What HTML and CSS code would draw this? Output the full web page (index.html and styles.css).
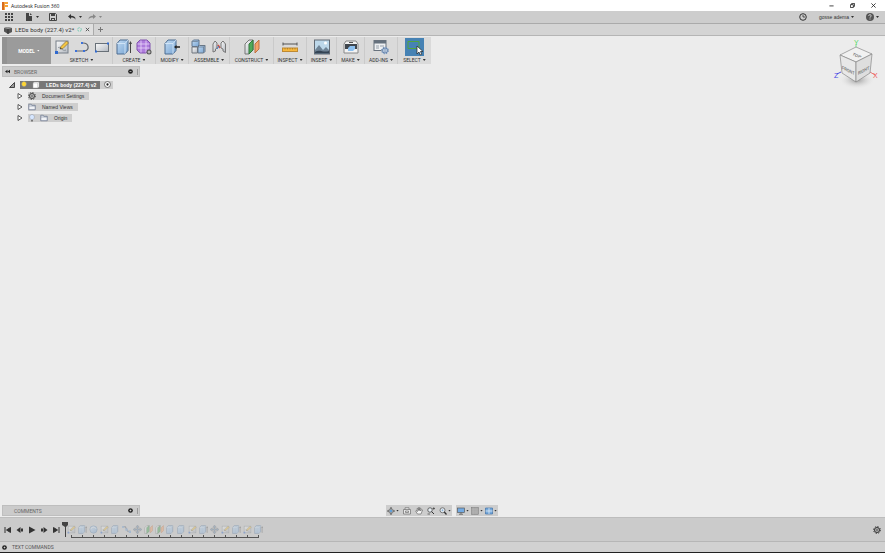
FILE: index.html
```html
<!DOCTYPE html>
<html lang="en">
<head>
<meta charset="utf-8">
<title>Autodesk Fusion 360</title>
<link rel="stylesheet" href="styles.css">
</head>
<body>
<svg class="defs" aria-hidden="true">
  <defs>
    <linearGradient id="blue" x1="0" y1="0" x2="1" y2="1"><stop offset="0" stop-color="#c2dbf3"/><stop offset="1" stop-color="#76a3d2"/></linearGradient>
    <linearGradient id="grey" x1="0" y1="0" x2="1" y2="1"><stop offset="0" stop-color="#fafafa"/><stop offset="1" stop-color="#b2b8c0"/></linearGradient>
    <radialGradient id="shade"><stop offset="0" stop-color="#999"/><stop offset="1" stop-color="#ececec" stop-opacity="0"/></radialGradient>
  </defs>
  <symbol id="sketch" viewBox="0 0 16 16"><rect x="2" y="2" width="12" height="12" fill="url(#grey)" stroke="#777f88"/><path d="M4 9c2-3 4 4 8 2" fill="none" stroke="#8a9199"/><path d="M6 10l1-2.500 5.500-5.500 2 2L9 9.500z" fill="#f4c542" stroke="#816b35" stroke-width=".7"/><path d="M6 10l.6-1.600L7.800 9.500z" fill="#333"/><path d="M1 12h3v3H1z" fill="#2f69cf"/></symbol>
  <symbol id="arc" viewBox="0 0 16 16"><path d="M2 12h8.500C16 11 15 4 9 4" fill="none" stroke="#62676e" stroke-width="1.200"/><path d="M1 11h2v2H1zM9 11h2v2H9zM7 3h2v2H7z" fill="#3d72da"/></symbol>
  <symbol id="rect" viewBox="0 0 16 16"><rect x="1.500" y="4.500" width="13" height="8" fill="url(#grey)" stroke="#687078"/><path d="M13 3.500h2v2h-2zM1 11.500h2v2H1z" fill="#2f69cf"/></symbol>
  <symbol id="box" viewBox="0 0 16 16"><path d="M1 4.500L4 1h8v10.500L9 15H1z" fill="url(#blue)" stroke="#4c6d91" stroke-linejoin="round"/><path d="M1 4.500h8L12 1M9 4.500V15" fill="none" stroke="#d9eafa" stroke-width=".8"/></symbol>
  <symbol id="extrude" viewBox="0 0 16 16"><use href="#box"/><path d="M14.500 14V4" stroke="#444" stroke-width="1"/><path d="M13 5l1.500-3L16 5z" fill="#444"/></symbol>
  <symbol id="form" viewBox="0 0 16 16"><path d="M4 1h7l3 3v7l-4 3H4l-3-3V4z" fill="#ae7bdd" stroke="#8053ae"/><path d="M1.500 5h12M1.500 9h12M5 1.500v12M10 1.500v12" stroke="#ead9fa" stroke-width=".8"/><circle cx="13" cy="13" r="2.500" fill="#555"/><path d="M11.500 13h3M13 11.500v3" stroke="#fff" stroke-width=".7"/></symbol>
  <symbol id="press" viewBox="0 0 16 16"><use href="#box"/><path d="M10 8l2.500-2v1.300H16v1.400h-3.500V10z" fill="#222"/></symbol>
  <symbol id="component" viewBox="0 0 16 16"><path d="M1 2.500L2.500 1H8v5L6.500 7.500H1z" fill="url(#blue)" stroke="#5d7590"/><path d="M1 8h5.500v6H1z" fill="url(#grey)" stroke="#71777f"/><path d="M7 8l1.500-1.500H14v6L12.500 14H7z" fill="url(#blue)" stroke="#697786"/><path d="M7 8h5.500L14 6.500M12.500 8v6M1 2.500h5.500L8 1" fill="none" stroke="#65778a" stroke-width=".7"/></symbol>
  <symbol id="joint" viewBox="0 0 16 16"><path d="M2 13V5l2-3 2 2v5l-1.500 1v2z" fill="url(#grey)" stroke="#777"/><path d="M10 9V4l2-2 2.500 3v8.500L12 12v-2z" fill="url(#grey)" stroke="#777"/><path d="M7 6l2 3" stroke="#d24d3c" stroke-width="1.500"/><path d="M6 10l2-3" stroke="#3d72c4"/></symbol>
  <symbol id="plane" viewBox="0 0 16 16"><path d="M1 5l4-4h4v10l-4 4H1z" fill="url(#grey)" stroke="#777"/><path d="M5 5l4-4v10l-4 4z" fill="#4eaa59" stroke="#34783d"/><path d="M11 5l4-4v9l-4 4z" fill="#f4a36a" stroke="#bd7142"/></symbol>
  <symbol id="measure" viewBox="0 0 16 16"><path d="M1 5h14M1 3.500v3M15 3.500v3" stroke="#555"/><rect x=".5" y="9" width="15" height="3.500" fill="#f7b83e" stroke="#bd8a34"/><path d="M3 9v1.500M5.500 9v1.500M8 9v1.500M10.500 9v1.500M13 9v1.500" stroke="#8c621b" stroke-width=".5"/></symbol>
  <symbol id="image" viewBox="0 0 16 16"><rect x=".5" y="1" width="15" height="14" fill="#bdd8ea" stroke="#626b75"/><path d="M1 11l4-5 4 5 3-3 3 3v3.500H1z" fill="#6f8496"/><path d="M1 13c5-3 8 1 14-1v2.500H1z" fill="#344454"/><circle cx="11.500" cy="4" r="1.500" fill="#fff"/></symbol>
  <symbol id="printer" viewBox="0 0 16 16"><path d="M3 2h10l2 3v9H1V5z" fill="#f2f2f2" stroke="#888"/><path d="M2 5h12v5H2z" fill="#40464d"/><path d="M5 9l2-2h5v3l-2 2H5z" fill="#8cc0ef"/><path d="M6 3.500h4" stroke="#555"/></symbol>
  <symbol id="gear" viewBox="0 0 16 16"><circle cx="8" cy="8" r="5" fill="none" stroke="currentColor" stroke-width="2"/><circle cx="8" cy="8" r="6.800" fill="none" stroke="currentColor" stroke-width="2" stroke-dasharray="2.670 2.670"/><circle cx="8" cy="8" r="2" fill="none" stroke="currentColor" stroke-width="1.200"/></symbol>
  <symbol id="addins" viewBox="0 0 16 16"><rect x="1" y="1.500" width="12" height="10" fill="#eef0f2" stroke="#68727d"/><path d="M1 2h12v2.500H1z" fill="#65717d"/><path d="M3 7h3M3 9h3M7 7h4" stroke="#96a0aa"/><circle cx="12" cy="11.500" r="3.500" fill="#d4e1ef"/><use href="#gear" x="8" y="7.500" width="8" height="8" color="#5c7ca5"/></symbol>
  <symbol id="select" viewBox="0 0 19 18"><rect width="19" height="18" fill="#4682b4"/><path d="M3 3.500h11v7H3z" fill="none" stroke="#51a53e" stroke-width="1"/><path d="M12 8v8l2-2 1.200 3 1.500-.7-1.200-2.800H18z" fill="#fff" stroke="#222" stroke-width=".7"/></symbol>
  <symbol id="folder" viewBox="0 0 16 16"><path d="M1.500 13.500v-11h5l1 2h7v9z" fill="#f0f2f6" stroke="#667289" stroke-width="1.500"/><path d="M2 6h12" stroke="#667289"/></symbol>
  <symbol id="bulb" viewBox="0 0 16 16"><path d="M6 11C1 7 3.500 1 8 1s7 6 2 10z" fill="currentColor" stroke="#8d93a0"/><path d="M6 12h4v3H6z" fill="#777"/></symbol>
  <symbol id="cube" viewBox="0 0 16 16"><path d="M2 4l3-2h9v10l-3 2H2z" fill="#fff" stroke="#999"/><path d="M2 4h9l3-2M11 4v10" fill="none" stroke="#bbb"/></symbol>
  <symbol id="sphere" viewBox="0 0 16 16"><circle cx="8" cy="8" r="6.500" fill="url(#blue)" stroke="#5279a1"/><path d="M3 7c3-4 7-4 10 0" fill="none" stroke="#fff"/></symbol>
  <symbol id="chain" viewBox="0 0 16 16"><path d="M1 3h5l4 8h5" fill="none" stroke="#61676f" stroke-width="2"/><path d="M0 2h4v3H0zM6 6h4v4H6zM12 10h4v4h-4z" fill="#6fa0d8"/></symbol>
  <symbol id="move" viewBox="0 0 16 16"><path d="M8 0l3 4H9v3h3V5l4 3-4 3V9H9v3h2l-3 4-3-4h2V9H4v2L0 8l4-3v2h3V4H5z" fill="#6b8bad" stroke="#555" stroke-width=".6"/></symbol>
  <symbol id="orbit" viewBox="0 0 16 16"><path d="M8 0l2.500 3h-5zM8 16l2.500-3h-5zM0 8l3-2.500v5zM16 8l-3-2.500v5z" fill="#444"/><ellipse cx="8" cy="8" rx="6" ry="3" fill="none" stroke="#666"/><ellipse cx="8" cy="8" rx="3" ry="6" fill="none" stroke="#666"/><circle cx="8" cy="8" r="2.500" fill="#63a1d9"/></symbol>
  <symbol id="look" viewBox="0 0 16 16"><path d="M1 5h14v9H1zM4 5V1.500h8V5M5 8h6v3H5z" fill="#e8e8e8" stroke="#666" stroke-width="1.300"/></symbol>
  <symbol id="hand" viewBox="0 0 16 16"><path d="M5 14L1 8l1-1 3 2-1-6 1.500-.5L7 7V1h2v6l1.500-5L12 3l-1 5 2.500-3L15 6l-3 8z" fill="#f4f4f4" stroke="#444"/></symbol>
  <symbol id="zoom" viewBox="0 0 16 16"><circle cx="7" cy="6.500" r="5" fill="#e7eef4" stroke="#555" stroke-width="1.500"/><path d="M5 6.500h4M7 4.500v4" stroke="#6297c8"/><path d="M10.500 10l4.500 5" stroke="#333" stroke-width="2.500"/></symbol>
  <symbol id="zoompm" viewBox="0 0 16 16"><circle cx="6" cy="6" r="4.500" fill="#e7eef4" stroke="#444" stroke-width="1.500"/><path d="M9 9l5 5" stroke="#333" stroke-width="2"/><path d="M11 3h5M13.500 .5v5M1 14h5" stroke="#333" stroke-width="1.300"/></symbol>
  <symbol id="monitor" viewBox="0 0 16 16"><rect x="1" y="2" width="14" height="9" fill="#73aae2" stroke="#555" stroke-width="1.300"/><path d="M8 11v3M4 14.500h8" stroke="#555" stroke-width="1.500"/></symbol>
  <symbol id="grid" viewBox="0 0 16 16"><rect x="1" y="1" width="14" height="14" fill="#aaa" stroke="#777"/><path d="M1 5h14M1 10h14M5 1v14M10 1v14" stroke="#bbb" stroke-width=".5"/></symbol>
  <symbol id="views" viewBox="0 0 16 16"><path d="M1 2h14v12H1z" fill="#76a9db" stroke="#3b6ca4" stroke-width="1.300"/><path d="M1 8h14M8 2v12" stroke="#e7f0fa" stroke-width="1.500"/></symbol>
  <symbol id="undo" viewBox="0 0 16 16"><path d="M0 7l6-5v3.500c6 0 9 2 9 8-2-4-4-4.500-9-4.500v3z" fill="currentColor"/></symbol>
  <symbol id="start" viewBox="0 0 16 16"><path d="M2 2v12M13 3v10L5 8z" fill="currentColor" stroke="currentColor" stroke-width="2"/></symbol>
  <symbol id="back" viewBox="0 0 16 16"><path d="M1 8l8-6v12zM10 5h4v6h-4z" fill="currentColor"/></symbol>
  <symbol id="play" viewBox="0 0 16 16"><path d="M2 1l13 7-13 7z" fill="currentColor"/></symbol>
  <symbol id="dot" viewBox="0 0 16 16"><circle cx="8" cy="8" r="7.500" fill="#222"/><path d="M5 8h6" stroke="#eee" stroke-width="2"/></symbol>
  <symbol id="dotplus" viewBox="0 0 16 16"><use href="#dot"/><path d="M8 5v6" stroke="#eee" stroke-width="2"/></symbol>
</svg>

<header class="titlebar">
  <svg class="i8" viewBox="0 0 8 8"><path d="M1 0h6v2H4v1h3v2H4v3H1z" fill="#f6a33b"/><path d="M1 0h2v8H1z" fill="#d76b21"/></svg>
  <h1>Autodesk Fusion 360</h1>
  <div class="window-buttons">
    <button aria-label="Minimize"><svg viewBox="0 0 6 6"><path d="M.5 3.500h5" stroke="#222"/></svg></button>
    <button aria-label="Restore"><svg viewBox="0 0 6 6"><path d="M.5 2h3.500v3.500H.5zM2 2V.5h3.500V4H4" fill="none" stroke="#222"/></svg></button>
    <button aria-label="Close"><svg viewBox="0 0 6 6"><path d="M.5.5l5 5M5.500.5l-5 5" stroke="#222"/></svg></button>
  </div>
</header>

<div class="quickbar">
  <button class="apps" aria-label="Data panel"><svg class="i8" viewBox="0 0 8 8"><path d="M0 0h2v2H0zM3 0h2v2H3zM6 0h2v2H6zM0 3h2v2H0zM3 3h2v2H3zM6 3h2v2H6zM0 6h2v2H0zM3 6h2v2H3zM6 6h2v2H6z" fill="#444"/></svg></button>
  <button class="file" aria-label="File"><svg class="i8" viewBox="0 0 8 8"><path d="M1 0h3v3h3v5H1zM5 0l2 2H5z" fill="#444"/></svg><i class="caret"></i></button>
  <button class="save" aria-label="Save"><svg class="i8" viewBox="0 0 8 8"><path d="M.5.5h6l1 1v6h-7z" fill="#ccc" stroke="#444"/><path d="M2 0h4v3H2zM2 5h4v3H2z" fill="#444"/><path d="M3 6h2v1H3z" fill="#ccc"/></svg></button>
  <button class="undo" aria-label="Undo"><svg class="i8"><use href="#undo"/></svg><i class="caret"></i></button>
  <button class="redo" aria-label="Redo"><svg class="i8 flip"><use href="#undo"/></svg><i class="caret"></i></button>
  <div class="account">
    <button aria-label="Job status"><svg class="i8" viewBox="0 0 8 8"><circle cx="4" cy="4" r="3.300" fill="none" stroke="#333"/><path d="M4 2v2h2" fill="none" stroke="#333" stroke-width=".8"/></svg></button>
    <button>gosse adema<i class="caret"></i></button>
    <button aria-label="Help"><svg class="i8" viewBox="0 0 8 8"><circle cx="4" cy="4" r="4" fill="#555"/><path d="M2.700 3c0-2 2.800-1.500 2.500 0-.1.800-1.200.7-1.200 1.700M4 5.500v1" fill="none" stroke="#eee" stroke-width=".8"/></svg><i class="caret"></i></button>
  </div>
</div>

<nav class="tabs">
  <div class="tab">
    <svg class="i8" viewBox="0 0 8 8"><path d="M0 2l3-1 5 1v4L4 8 0 5.500z" fill="#555"/><path d="M0 2l4 1 4-1-5-1z" fill="#999"/><path d="M4 3v5" stroke="#333"/></svg>
    <a href="#document">LEDs body (227.4) v2*</a>
    <svg class="i5" viewBox="0 0 6 6"><circle cx="3" cy="3" r="2.200" fill="none" stroke="#65c4ac" stroke-dasharray="2.500 1"/></svg>
    <button aria-label="Close tab"><svg class="i5" viewBox="0 0 6 6"><path d="M1 1l4 4M5 1L1 5" stroke="#444"/></svg></button>
  </div>
  <button class="newtab" aria-label="New tab"><svg class="i5" viewBox="0 0 5 5"><path d="M0 2.500h5M2.500 0v5" stroke="#777"/></svg></button>
</nav>

<main>
  <div class="ribbon">
    <button class="workspace">MODEL<i class="caret"></i></button>
    <section class="group three"><div><button aria-label="Create sketch"><svg><use href="#sketch"/></svg></button><button aria-label="Line"><svg><use href="#arc"/></svg></button><button aria-label="Rectangle"><svg><use href="#rect"/></svg></button></div><button class="label">SKETCH<i class="caret"></i></button></section>
    <section class="group two"><div><button aria-label="Extrude"><svg><use href="#extrude"/></svg></button><button aria-label="Create form"><svg><use href="#form"/></svg></button></div><button class="label">CREATE<i class="caret"></i></button></section>
    <section class="group one"><div><button aria-label="Press pull"><svg><use href="#press"/></svg></button></div><button class="label">MODIFY<i class="caret"></i></button></section>
    <section class="group assemble"><div><button aria-label="New component"><svg><use href="#component"/></svg></button><button aria-label="Joint"><svg><use href="#joint"/></svg></button></div><button class="label">ASSEMBLE<i class="caret"></i></button></section>
    <section class="group wide"><div><button aria-label="Offset plane"><svg><use href="#plane"/></svg></button></div><button class="label">CONSTRUCT<i class="caret"></i></button></section>
    <section class="group one"><div><button aria-label="Measure"><svg><use href="#measure"/></svg></button></div><button class="label">INSPECT<i class="caret"></i></button></section>
    <section class="group small"><div><button aria-label="Insert image"><svg><use href="#image"/></svg></button></div><button class="label">INSERT<i class="caret"></i></button></section>
    <section class="group make"><div><button aria-label="3D print"><svg><use href="#printer"/></svg></button></div><button class="label">MAKE<i class="caret"></i></button></section>
    <section class="group one"><div><button aria-label="Scripts and add-ins"><svg><use href="#addins"/></svg></button></div><button class="label">ADD-INS<i class="caret"></i></button></section>
    <section class="group one"><div><button aria-label="Select"><svg class="selected"><use href="#select"/></svg></button></div><button class="label">SELECT<i class="caret"></i></button></section>
  </div>

  <aside class="browser">
    <div class="panel-head"><button aria-label="Collapse"><svg class="i5" viewBox="0 0 6 6"><path d="M0 3l3-2v4zM3 3l3-2v4z" fill="#222"/></svg></button><h2>BROWSER</h2><button aria-label="Panel options"><svg class="i5"><use href="#dot"/></svg></button><i class="grip"></i></div>
    <ul class="tree">
      <li class="root"><svg class="i6" viewBox="0 0 6 6"><path d="M5.500.5v5h-5z" fill="#999" stroke="#444"/></svg><div class="row"><div class="active"><svg class="i8 lit"><use href="#bulb"/></svg><svg class="i8"><use href="#cube"/></svg><span>LEDs body (227.4) v2</span></div><button aria-label="Activate component"><svg class="i7" viewBox="0 0 8 8"><circle cx="4" cy="4" r="3.400" fill="#fff" stroke="#444" stroke-width=".8"/><circle cx="4" cy="4" r="1.300" fill="#222"/></svg></button></div></li>
      <li><svg class="i6" viewBox="0 0 6 6"><path d="M1 .5L5 3 1 5.500z" fill="#fff" stroke="#333" stroke-width=".8"/></svg><div class="row"><svg class="i8 dark"><use href="#gear"/></svg><span>Document Settings</span></div></li>
      <li><svg class="i6" viewBox="0 0 6 6"><path d="M1 .5L5 3 1 5.500z" fill="#fff" stroke="#333" stroke-width=".8"/></svg><div class="row"><svg class="i8"><use href="#folder"/></svg><span>Named Views</span></div></li>
      <li><svg class="i6" viewBox="0 0 6 6"><path d="M1 .5L5 3 1 5.500z" fill="#fff" stroke="#333" stroke-width=".8"/></svg><div class="row"><svg class="i8 off"><use href="#bulb"/></svg><svg class="i8"><use href="#folder"/></svg><span class="origin">Origin</span></div></li>
    </ul>
  </aside>

  <svg class="viewcube" viewBox="0 0 48 52" role="img" aria-label="View cube">
    <ellipse cx="25" cy="41" rx="18" ry="9" fill="url(#shade)"/>
    <path d="M24 10V5" stroke="#7fe08b"/><path d="M9 33l-4 2" stroke="#5151df"/><path d="M38 33l5 3" stroke="#ee7474"/>
    <path d="M8 16l16-8 16 7-16 8z" fill="#f1f1f1" stroke="#888" stroke-width=".7"/><path d="M8 16l16 7v20L10 34z" fill="#e8e8e8" stroke="#888" stroke-width=".7"/><path d="M24 23l16-8-2 19-14 9z" fill="#dedede" stroke="#888" stroke-width=".7"/>
    <g class="face"><text transform="matrix(1 .4 -.6 .8 20 16)">TOP</text><text transform="matrix(.9 .45 0 1.200 10 30)">FRONT</text><text transform="matrix(.9 -.45 0 1.200 26 36)">RIGHT</text></g>
    <g class="axis"><text x="22" y="6" fill="#54d864">Y</text><text x="2" y="39" fill="#4545e5">Z</text><text x="41" y="39" fill="#ef5555">X</text></g>
  </svg>

  <div class="bottom">
    <div class="panel-head comments"><h2>COMMENTS</h2><button aria-label="Add comment"><svg class="i5"><use href="#dotplus"/></svg></button><i class="grip"></i></div>
    <div class="navbar">
      <div><button aria-label="Orbit"><svg class="i8"><use href="#orbit"/></svg><i class="caret"></i></button><button aria-label="Look at"><svg class="i8"><use href="#look"/></svg></button><button aria-label="Pan"><svg class="i8"><use href="#hand"/></svg></button><button aria-label="Zoom"><svg class="i8"><use href="#zoompm"/></svg></button><button aria-label="Fit"><svg class="i8"><use href="#zoom"/></svg><i class="caret"></i></button></div>
      <div><button aria-label="Display settings"><svg class="i8"><use href="#monitor"/></svg><i class="caret"></i></button><button aria-label="Grid and snaps"><svg class="i8"><use href="#grid"/></svg><i class="caret"></i></button><button aria-label="Viewports"><svg class="i8"><use href="#views"/></svg><i class="caret"></i></button></div>
    </div>
  </div>
</main>

<section class="timeline">
  <div class="playback"><button aria-label="Go to start"><svg class="i8"><use href="#start"/></svg></button><button aria-label="Step back"><svg class="i8"><use href="#back"/></svg></button><button aria-label="Play"><svg class="i8"><use href="#play"/></svg></button><button aria-label="Step forward"><svg class="i8 flip"><use href="#back"/></svg></button><button aria-label="Go to end"><svg class="i8 flip"><use href="#start"/></svg></button></div>
  <svg class="marker" viewBox="0 0 6 16"><path d="M0 0h6v3L4 5v10H3V5L0 3z" fill="#444"/></svg>
  <ol class="features">
    <li><svg><use href="#sketch"/></svg></li><li><svg><use href="#extrude"/></svg></li><li><svg><use href="#sphere"/></svg></li><li><svg><use href="#sketch"/></svg></li><li><svg><use href="#box"/></svg></li><li><svg><use href="#chain"/></svg></li><li><svg><use href="#move"/></svg></li><li><svg><use href="#plane"/></svg></li><li><svg><use href="#plane"/></svg></li><li><svg><use href="#box"/></svg></li><li><svg><use href="#box"/></svg></li><li><svg><use href="#sketch"/></svg></li><li><svg><use href="#extrude"/></svg></li><li><svg><use href="#move"/></svg></li><li><svg><use href="#sketch"/></svg></li><li><svg><use href="#extrude"/></svg></li><li><svg><use href="#sketch"/></svg></li><li><svg><use href="#extrude"/></svg></li>
  </ol>
  <button class="settings" aria-label="Timeline settings"><svg class="i8"><use href="#gear"/></svg></button>
</section>
<footer class="commands"><button aria-label="Expand"><svg class="i5"><use href="#dotplus"/></svg></button><h2>TEXT COMMANDS</h2></footer>
</body>
</html>
```
FILE: styles.css
```css
* { box-sizing: border-box; }
html, body { height: 100%; }
body {
  margin: 0;
  display: flex;
  flex-direction: column;
  background: #ececec;
  color: #333;
  font: 5px/8px "Liberation Sans", Arial, sans-serif;
  overflow: hidden;
}
h1, h2 { margin: 0; font: 5px/8px Roboto, sans-serif; }
ul, ol { margin: 0; padding: 0; list-style: none; }
a { color: inherit; text-decoration: none; }
button {
  display: flex;
  align-items: center;
  margin: 0;
  padding: 0;
  border: 0;
  background: none;
  color: inherit;
  font: inherit;
}
svg { display: block; flex: none; }
.defs { position: absolute; width: 0; height: 0; }
.i5 { width: 5px; height: 5px; }
.i6 { width: 6px; height: 6px; }
.i7 { width: 7px; height: 7px; }
.i8 { width: 8px; height: 8px; }
.flip { transform: scaleX(-1); }
.caret {
  width: 3px;
  height: 2px;
  margin-left: 2px;
  background: currentColor;
  clip-path: polygon(0 0, 100% 0, 50% 100%);
}

.titlebar {
  display: flex;
  flex: none;
  align-items: center;
  gap: 2px;
  height: 11px;
  padding-left: 1px;
  background: #fff;
  color: #111;
}
.titlebar h1 { font: 5px/8px "Open Sans", sans-serif; }
.window-buttons { display: flex; gap: 16px; margin-left: auto; padding-right: 9px; }
.window-buttons svg { width: 5px; height: 5px; }

.quickbar {
  display: flex;
  flex: none;
  align-items: center;
  height: 13px;
  padding: 0 6px 0 5px;
  background: #cdcdcd;
  border-bottom: 1px solid #aaa;
}
.quickbar > button > .caret { margin-left: 3px; }
.apps { margin-right: 12px; }
.file { margin-right: 10px; }
.save { margin-right: 11px; }
.undo { margin-right: 6px; }
.redo { color: #888; }
.account { display: flex; margin-left: auto; gap: 12px; }

.tabs {
  display: flex;
  flex: none;
  height: 12px;
  background: #d4d4d4;
  border-bottom: 1px solid #b5b5b5;
}
.tab {
  display: flex;
  align-items: center;
  gap: 3px;
  padding: 0 3px 0 4px;
  background: #dfdfdf;
  border-right: 1px solid #aaa;
  font: 6px/8px Roboto, sans-serif;
}
.newtab { padding: 0 4px; }

main { position: relative; display: flex; flex: 1; flex-direction: column; min-height: 0; padding: 1px 2px; }
.ribbon {
  display: flex;
  align-self: flex-start;
  height: 27px;
  background: #dadada;
  font-family: Roboto, sans-serif;
}
.workspace {
  justify-content: center;
  width: 49px;
  border-left: 5px solid #929292;
  background: #9b9b9b;
  color: #fff;
  font-weight: bold;
}
.group { display: flex; flex-direction: column; align-items: center; padding-top: 1px; border-right: 1px solid #cacaca; }
.group:last-child { border: 0; }
.group > div { display: flex; align-items: center; gap: 4px; height: 18px; }
.group svg { width: 16px; height: 16px; }
.group .selected { width: 19px; height: 18px; }
.three { width: 62px; }
.two { width: 43px; }
.assemble { width: 41px; }
.one { width: 33px; }
.wide { width: 44px; }
.small { width: 30px; }
.make { width: 28px; }

.browser { width: 138px; margin-top: 2px; }
.panel-head {
  display: flex;
  align-items: center;
  gap: 4px;
  height: 11px;
  padding: 0 1px 0 2px;
  background: #cbcbcb;
  border: 1px solid #bebebe;
  color: #666;
}
.panel-head h2 { flex: 1; }
.grip { width: 1px; height: 6px; background: #999; }
.tree { padding: 2px 0 0 15px; }
.tree li { display: flex; align-items: center; gap: 5px; height: 11px; }
.tree .root { margin-left: -8px; }
.row { display: flex; align-items: center; gap: 4px; height: 8px; padding: 0 5px 0 0; background: #cecece; }
.row span { padding-left: 2px; }
.root .row { padding-right: 2px; }
.active { display: flex; align-items: center; gap: 4px; height: 8px; padding-right: 4px; background: #777; color: #fff; font-weight: bold; }
.lit { color: #ffd633; }
.off { color: #d6e7ff; }
.dark { color: #444; }

.viewcube { position: absolute; top: 3px; right: 5px; width: 48px; height: 52px; }
.face { font-size: 4px; font-weight: bold; fill: #777; }
.axis { font-size: 7px; }

.bottom { display: grid; grid-template-columns: 138px 1fr; margin-top: auto; }
.comments { padding-left: 11px; }
.navbar { display: flex; gap: 4px; padding-left: 246px; }
.navbar > div { display: flex; align-items: center; gap: 4px; height: 11px; padding: 0 1px; background: #cdcdcd; }
.navbar > div + div { gap: 2px; }
.navbar .caret { margin-left: 1px; }

.timeline {
  display: flex;
  flex: none;
  align-items: center;
  height: 24px;
  padding: 0 4px;
  background: #cbcbcb;
  border-top: 1px solid #bdbdbd;
}
.playback { display: flex; gap: 4px; color: #333; }
.marker { width: 6px; height: 16px; margin-left: 2px; }
.features { position: relative; display: flex; margin-left: -2px; padding-top: 4px; }
.features::after { content: ""; position: absolute; left: 5px; right: 5px; bottom: 0; height: 1px; background: #555; }
.features li { position: relative; width: 11px; height: 13px; }
.features li::after { content: ""; position: absolute; left: 5px; bottom: 0; width: 1px; height: 3px; background: #555; }
.features svg { width: 9px; height: 9px; margin: 0 1px; opacity: .4; }
.settings { margin-left: auto; }
.commands {
  display: flex;
  flex: none;
  align-items: center;
  gap: 5px;
  height: 12px;
  padding-left: 2px;
  background: #d1d1d1;
  border-top: 1px solid #b6b6b6;
  border-bottom: 1px solid #222;
  color: #555;
}
```
